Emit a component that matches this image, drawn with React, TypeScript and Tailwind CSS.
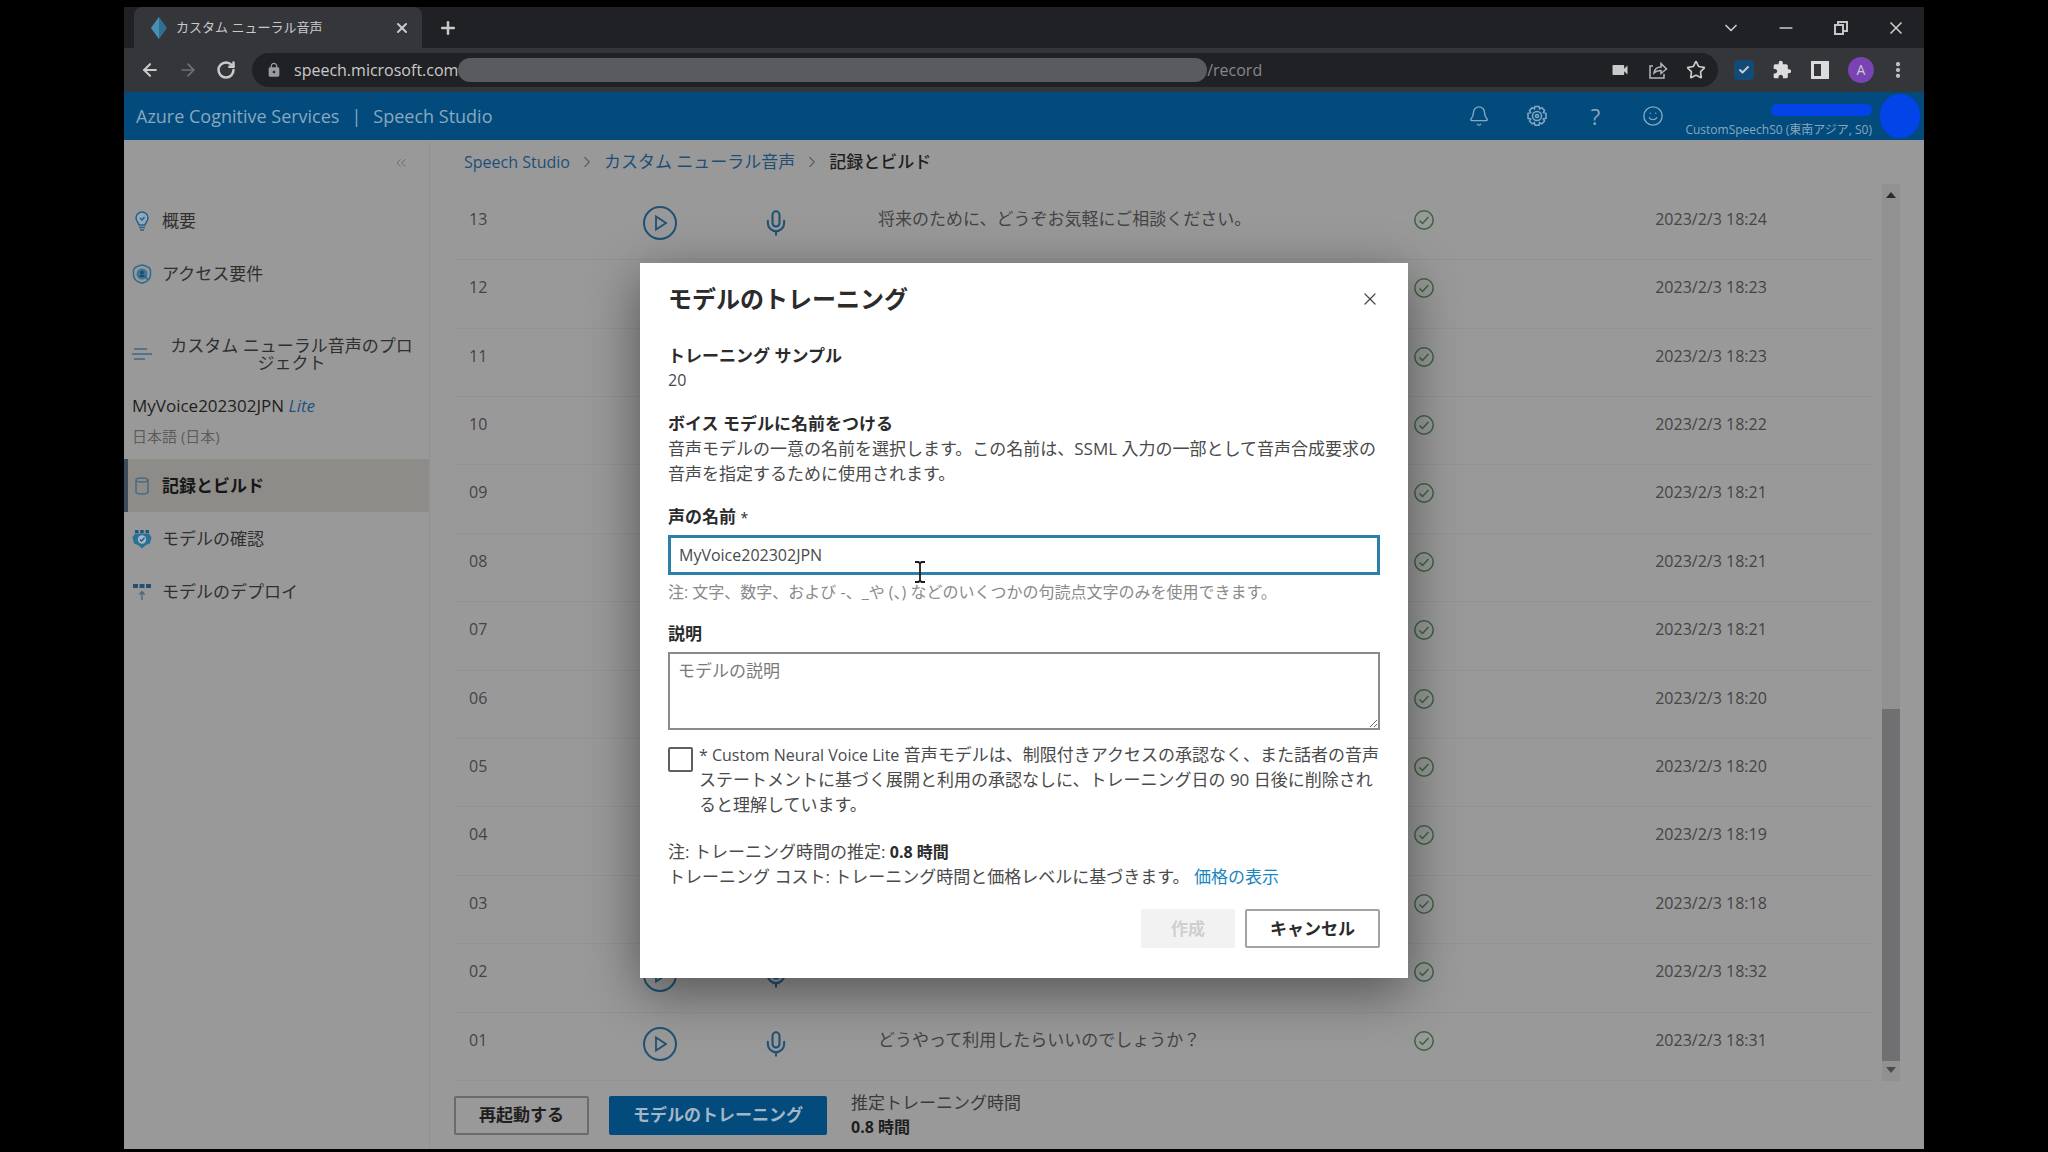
import { useState } from 'react';
import {
  ArrowLeft, ArrowRight, Bell, Check, ChevronDown, ChevronRight, ChevronsLeft,
  EllipsisVertical, Mic, Minus, Plus, RotateCw, Smile, Star, X,
} from 'lucide-react';
import { MdExtension, MdLock, MdVideocam } from 'react-icons/md';

interface Recording {
  id: string;
  text: string;
  date: string;
}

const recordings: Recording[] = [
  { id: '13', text: '将来のために、どうぞお気軽にご相談ください。', date: '2023/2/3 18:24' },
  { id: '12', text: '', date: '2023/2/3 18:23' },
  { id: '11', text: '', date: '2023/2/3 18:23' },
  { id: '10', text: '', date: '2023/2/3 18:22' },
  { id: '09', text: '', date: '2023/2/3 18:21' },
  { id: '08', text: '', date: '2023/2/3 18:21' },
  { id: '07', text: '', date: '2023/2/3 18:21' },
  { id: '06', text: '', date: '2023/2/3 18:20' },
  { id: '05', text: '', date: '2023/2/3 18:20' },
  { id: '04', text: '', date: '2023/2/3 18:19' },
  { id: '03', text: '', date: '2023/2/3 18:18' },
  { id: '02', text: '', date: '2023/2/3 18:32' },
  { id: '01', text: 'どうやって利用したらいいのでしょうか？', date: '2023/2/3 18:31' },
];

const BulbIcon = () => (
  <svg viewBox="0 0 20 20" className="h-5 w-5" fill="none" stroke="#2c5f86" strokeWidth="1.5">
    <path d="M7 14c0-2-3-3.500-3-7a6 6 0 0 1 12 0c0 3.500-3 5-3 7z" fill="#8fa9bb" />
    <path d="M7 16.500h6M8 19h4M8 7l2 2 2.500-3" />
  </svg>
);

const AccessIcon = () => (
  <svg viewBox="0 0 20 20" className="h-5 w-5" fill="none" stroke="#2c6a8f" strokeWidth="1.500">
    <path d="M10 1l3 .8 4 1.700 1.500 2.500v5c0 4.500-4 7-8.500 8.200C5.500 18 1.500 15.500 1.500 11V6L3 3.500l4-1.700z" />
    <circle cx="10" cy="10" r="5.500" fill="#3a7496" stroke="none" />
    <circle cx="10" cy="8.500" r="2" fill="#1d4f70" stroke="none" />
    <path d="M7 13c0-3.500 6-3.500 6 0" fill="#1d4f70" stroke="none" />
    <path d="M13 12l3 4" />
  </svg>
);

const LinesIcon = () => (
  <svg viewBox="0 0 20 16" className="h-4 w-5 shrink-0" stroke="#3f6681" strokeWidth="1.500">
    <path d="M2 3h13M0 8h20M2 13h11" />
  </svg>
);

const DatabaseIcon = () => (
  <svg viewBox="0 0 20 20" className="h-5 w-5" fill="none" stroke="#48687d" strokeWidth="1.400">
    <path d="M4 4v12c0 1.300 2.500 2 6 2s6-.7 6-2V4" />
    <ellipse cx="10" cy="4" rx="6" ry="2" />
  </svg>
);

const ModelIcon = () => (
  <svg viewBox="0 0 20 20" className="h-5 w-5">
    <path d="M3 1h3.500v3H3zM8.200 1h3.500v3H8.200zM13.500 1H17v3h-3.500z" fill="#1f5478" />
    <path d="M3 4.500h14l2.500 4-1.500 6-4 1.500-4 3.500L6 16l-4-1.500-1.500-6z" fill="#2b7095" />
    <circle cx="10" cy="10.500" r="4.200" fill="#9fb8c5" />
    <path d="M8 10.500l1.500 1.600 3-3.400" fill="none" stroke="#1f5478" strokeWidth="1.300" />
  </svg>
);

const DeployIcon = () => (
  <svg viewBox="0 0 20 20" className="h-5 w-5">
    <path d="M1 2h5v4H1zM7.500 2h5v4h-5zM14 2h5v4h-5z" fill="#28506e" />
    <path d="M10 18V10M7.500 12.500L10 9.500l2.500 3" fill="none" stroke="#4f6577" strokeWidth="1.400" />
  </svg>
);

const PlayIcon = () => (
  <svg viewBox="0 0 36 36" className="h-9 w-9" fill="none" stroke="#1f5273" strokeWidth="2">
    <circle cx="18" cy="18" r="16" />
    <path d="M14 11.500v13L24 18z" strokeWidth="1.800" />
  </svg>
);

const DoneIcon = () => (
  <svg viewBox="0 0 22 22" className="mx-auto h-[22px] w-[22px]" fill="none" stroke="#3c6440" strokeWidth="1.500">
    <circle cx="11" cy="11" r="9.200" />
    <path d="M6.500 11.500l3 3 6-6.500" />
  </svg>
);

const GearIcon = () => (
  <svg viewBox="0 0 22 22" className="h-[22px] w-[22px]" fill="none" stroke="currentColor" strokeWidth="1.500">
    <path d="M9 1.500h4l.6 2.400 2.200-1.200 2.700 2.700-1.200 2.200 2.700.7v5l-2.700.7 1.200 2.200-2.700 2.700-2.200-1.200-.6 2.600H9l-.6-2.600-2.200 1.200-2.700-2.700 1.200-2.200L2 13.300v-5l2.700-.7-1.200-2.200 2.700-2.700 2.200 1.200z" />
    <circle cx="11" cy="11" r="4.500" />
    <circle cx="11" cy="11" r="1.500" />
  </svg>
);

const ShareIcon = () => (
  <svg viewBox="0 0 20 20" className="h-5 w-5" fill="none" stroke="#b5b6b9" strokeWidth="1.500">
    <path d="M5 6H2v12h14v-4" />
    <path d="M6 13c.5-4 3-6 7-6V3.500L18.500 9 13 13.500V10.500c-3 0-5 .5-7 2.500z" />
  </svg>
);

const SidePanelIcon = () => (
  <svg viewBox="0 0 20 20" className="h-5 w-5">
    <path d="M1 1h18v18H1z" fill="#dcdcde" />
    <path d="M4 4h7v12H4z" fill="#35363a" />
  </svg>
);

const RestoreIcon = () => (
  <svg viewBox="0 0 16 16" className="h-4 w-4" fill="none" stroke="#c4c5c7" strokeWidth="2">
    <path d="M2 5h8v9H2z" />
    <path d="M5 4V2h9v9h-3" />
  </svg>
);

const projectItems = [
  { label: '記録とビルド', icon: DatabaseIcon, active: true },
  { label: 'モデルの確認', icon: ModelIcon, active: false },
  { label: 'モデルのデプロイ', icon: DeployIcon, active: false },
];

const BrowserBar = () => (
  <div className="bg-[#202124] text-[#c9cacc]">
    <div className="flex h-[41px] items-stretch">
      <div className="ml-[10px] flex w-[288px] items-center rounded-t-lg bg-[#35363a] pl-4 pr-3">
        <svg viewBox="0 0 18 22" className="mr-2 h-[22px] w-[18px]">
          <path d="M9 0l8 11-8 11-8-11z" fill="#2f6f93" />
          <path d="M9 0v22l-8-11z" fill="#4690b5" />
        </svg>
        <span className="flex-1 truncate text-[13px]">カスタム ニューラル音声</span>
        <button type="button" aria-label="タブを閉じる"><X className="h-4 w-4" strokeWidth={3} /></button>
      </div>
      <button type="button" aria-label="新しいタブ" className="ml-4"><Plus className="h-5 w-5" strokeWidth={3} /></button>
      <div className="ml-auto flex items-center gap-[35px] pr-[18px]">
        <button type="button" aria-label="タブを検索"><ChevronDown className="h-5 w-5" /></button>
        <button type="button" aria-label="最小化"><Minus className="h-5 w-5" /></button>
        <button type="button" aria-label="元に戻す" className="px-0.5"><RestoreIcon /></button>
        <button type="button" aria-label="閉じる"><X className="h-5 w-5" /></button>
      </div>
    </div>
    <div className="flex h-11 items-center bg-[#35363a] pl-4 pr-4">
      <button type="button" aria-label="戻る"><ArrowLeft className="h-5 w-5" strokeWidth={2.5} /></button>
      <button type="button" aria-label="進む" className="ml-[18px] text-[#707174]"><ArrowRight className="h-5 w-5" /></button>
      <button type="button" aria-label="再読み込み" className="ml-[18px]"><RotateCw className="h-5 w-5" strokeWidth={3} /></button>
      <div className="ml-4 flex h-[34px] flex-1 items-center rounded-full bg-[#202124] pl-[14px] pr-3">
        <MdLock className="mr-3 h-4 w-4 text-[#9a9b9e]" />
        <span className="text-base">speech.microsoft.com</span>
        <span className="h-6 w-[52%] rounded-full bg-[#5a5b5e]" />
        <span className="text-base text-[#85868a]">/record</span>
        <div className="ml-auto flex items-center gap-[18px]">
          <MdVideocam className="h-5 w-5" />
          <ShareIcon />
          <Star className="h-5 w-5" />
        </div>
      </div>
      <div className="ml-4 flex items-center gap-[18px]">
        <span className="flex h-5 w-5 items-center justify-center rounded-sm bg-[#124a78]"><Check className="h-3 w-3" strokeWidth={4} /></span>
        <MdExtension className="h-5 w-5 text-[#dcdcde]" />
        <SidePanelIcon />
        <span className="flex h-[26px] w-[26px] items-center justify-center rounded-full bg-[#7a43b3] text-sm">A</span>
        <button type="button" aria-label="メニュー" className="-ml-1"><EllipsisVertical className="h-5 w-5" strokeWidth={3} /></button>
      </div>
    </div>
  </div>
);

const Header = () => (
  <header className="flex h-12 items-center bg-[#034b7c] pl-3 pr-1 text-[#86a8c0]">
    <span className="text-[18px]">Azure Cognitive Services</span>
    <span className="mx-3 text-[18px]">|</span>
    <span className="text-[18px]">Speech Studio</span>
    <div className="ml-auto flex items-center gap-9 pr-[21px]">
      <button type="button" aria-label="通知"><Bell className="h-[22px] w-[22px]" strokeWidth={1.5} /></button>
      <button type="button" aria-label="設定"><GearIcon /></button>
      <button type="button" aria-label="ヘルプ" className="w-[22px] text-[22px]">?</button>
      <button type="button" aria-label="フィードバック"><Smile className="h-[22px] w-[22px]" strokeWidth={1.5} /></button>
    </div>
    <div className="flex flex-col items-end gap-1 pt-3">
      <span className="h-3 w-[101px] rounded-full bg-[#0244e8]" />
      <span className="text-[12px] leading-5">CustomSpeechS0 (東南アジア, S0)</span>
    </div>
    <span className="ml-2 h-11 w-10 rounded-[20px] bg-[#0244e8]" />
  </header>
);

const Sidebar = () => (
  <nav className="flex w-[306px] shrink-0 flex-col border-r border-[#939293] text-[17px] text-[#2f2f30]">
    <div className="mb-2 flex h-[46px] items-center justify-end pr-5 text-[#6c6c6d]">
      <button type="button" aria-label="折りたたむ"><ChevronsLeft className="h-4 w-4" strokeWidth={1.5} /></button>
    </div>
    <a href="#overview" className="flex h-[53px] items-center gap-[10px] pl-2"><BulbIcon />概要</a>
    <a href="#access" className="flex h-[53px] items-center gap-[10px] pl-2"><AccessIcon />アクセス要件</a>
    <div className="mt-4 flex h-[75px] items-center gap-[14px] pl-2 pr-3 leading-[17px]">
      <LinesIcon />
      <span className="flex-1 text-center">カスタム ニューラル音声のプロジェクト</span>
    </div>
    <div className="pl-2 leading-[30px]">
      <p className="font-medium text-[#1f1f20]">MyVoice202302JPN <i className="text-[#1c5380]">Lite</i></p>
      <p className="text-[15px] text-[#5c5c5d]">日本語 (日本)</p>
    </div>
    <div className="mt-2 flex flex-col">
      {projectItems.map(({ label, icon: Icon, active }) => (
        <a
          key={label}
          href="#project"
          className={`flex h-[53px] items-center gap-[10px] border-l-4 pl-1 ${
            active ? 'border-[#3d4d5e] bg-[#8d8c88] font-bold text-[#161617]' : 'border-transparent'
          }`}
        >
          <Icon />
          {label}
        </a>
      ))}
    </div>
  </nav>
);

const RecordingTable = () => (
  <table className="h-full w-full table-fixed text-[17px] text-[#444445]">
    <colgroup>
      <col className="w-[112px]" />
      <col className="w-[196px]" />
      <col className="w-[44px]" />
      <col />
      <col className="w-[232px]" />
      <col className="w-[334px]" />
    </colgroup>
    <tbody>
      {recordings.map(({ id, text, date }) => (
        <tr key={id} className="border-b border-[#939293] align-top">
          <td className="pl-[15px] pt-[15px] text-base">{id}</td>
          <td className="pt-[13px]"><button type="button" aria-label={`${id} を再生`} className="ml-[76px] block"><PlayIcon /></button></td>
          <td className="pt-[17px]"><button type="button" aria-label={`${id} を録音`} className="block"><Mic className="h-7 w-7 text-[#1f5273]" strokeWidth={1.75} /></button></td>
          <td className="pl-[72px] pt-[14px]">{text}</td>
          <td className="pt-[17px]"><DoneIcon /></td>
          <td className="pl-2 pt-[15px] text-center text-base">{date}</td>
        </tr>
      ))}
    </tbody>
  </table>
);

const TrainDialog = () => {
  const [name, setName] = useState('MyVoice202302JPN');
  const [description, setDescription] = useState('');
  const [agreed, setAgreed] = useState(false);

  return (
    <div
      role="dialog"
      aria-labelledby="dialog-title"
      className="w-[768px] bg-white px-7 pb-[30px] pt-4 text-[17px] leading-[25px] text-[#4a4a4b] shadow-[0_14px_50px_rgba(0,0,0,0.45)]"
    >
      <div className="flex h-10 items-center justify-between">
        <h2 id="dialog-title" className="text-2xl font-bold text-[#2b2b2c]">モデルのトレーニング</h2>
        <button type="button" aria-label="閉じる"><X className="h-5 w-5" strokeWidth={1.5} /></button>
      </div>

      <h3 className="mt-6 font-bold text-[#2b2b2c]">トレーニング サンプル</h3>
      <p className="text-base leading-[25px]">20</p>

      <h3 className="mt-[18px] font-bold text-[#2b2b2c]">ボイス モデルに名前をつける</h3>
      <p>音声モデルの一意の名前を選択します。この名前は、SSML 入力の一部として音声合成要求の音声を指定するために使用されます。</p>

      <label htmlFor="voice-name" className="mt-[18px] block font-bold text-[#2b2b2c]">声の名前 <span className="text-sm font-normal leading-none">*</span></label>
      <div className="relative mt-[6px]">
        <input
          id="voice-name"
          type="text"
          value={name}
          onChange={(e) => setName(e.target.value)}
          className="block h-10 w-full border-[3px] border-[#2d7fa8] bg-white px-2 text-base outline-none"
        />
        {/* text cursor */}
        <svg viewBox="0 0 12 22" className="absolute left-[246px] top-[26px] h-[22px] w-3" fill="none" stroke="#1d1d1e" strokeWidth="1.800">
          <path d="M1 1h3.500L6 2.500 7.500 1H11M6 2.500v17M1 21h3.500L6 19.500 7.500 21H11" />
        </svg>
      </div>
      <p className="mt-[5px] text-base leading-[25px] text-[#8a8a8b]">注: 文字、数字、および -、_や (、) などのいくつかの句読点文字のみを使用できます。</p>

      <label htmlFor="voice-description" className="mt-4 block font-bold text-[#2b2b2c]">説明</label>
      <textarea
        id="voice-description"
        value={description}
        onChange={(e) => setDescription(e.target.value)}
        placeholder="モデルの説明"
        className="mt-[6px] block h-[78px] w-full border-2 border-[#8b8b8c] px-2 pt-1 outline-none placeholder:text-[#7a7a7b]"
      />

      <div className="mt-3 flex items-start gap-[6px]">
        <input
          id="agree"
          type="checkbox"
          checked={agreed}
          onChange={(e) => setAgreed(e.target.checked)}
          className="mt-[5px] h-[25px] w-[25px] shrink-0 appearance-none rounded-xs border-2 border-[#5f5f60] checked:bg-[#0078d4]"
        />
        <label htmlFor="agree" className="-mr-2">
          <span className="text-base leading-none">* Custom Neural Voice Lite</span> 音声モデルは、制限付きアクセスの承認なく、また話者の音声ステートメントに基づく展開と利用の承認なしに、トレーニング日の 90 日後に削除されると理解しています。
        </label>
      </div>

      <p className="mt-[22px]">注: トレーニング時間の推定: <b className="text-base leading-none text-[#2b2b2c]">0.8 時間</b></p>
      <p>トレーニング コスト: トレーニング時間と価格レベルに基づきます。 <a href="#pricing" className="text-[#1a86bd]">価格の表示</a></p>

      <div className="mt-5 flex justify-end gap-[10px]">
        <button type="button" disabled className="h-[39px] w-[94px] bg-[#f3f2f2] font-bold text-[#cfcfd0]">作成</button>
        <button type="button" className="h-[39px] w-[135px] rounded-xs border-2 border-[#a3a3a4] font-bold text-[#2b2b2c]">キャンセル</button>
      </div>
    </div>
  );
};

export default function App() {
  return (
    <div className="relative flex h-screen flex-col bg-black px-[124px] pb-[3px] pt-[7px] font-['Open_Sans','Noto_Sans_CJK_JP',sans-serif]">
      <BrowserBar />
      <Header />
      <div className="flex min-h-0 flex-1 bg-[#9a999a]">
        <Sidebar />
        <main className="flex min-w-0 flex-1 flex-col pl-6 pr-6">
          <div className="flex h-11 shrink-0 items-center gap-2 pl-[10px] text-[17px] text-[#1d4f76]">
            <a href="#studio" className="text-base">Speech Studio</a>
            <ChevronRight className="h-[18px] w-[18px] text-[#5c5c5d]" strokeWidth={1.5} />
            <a href="#voice">カスタム ニューラル音声</a>
            <ChevronRight className="h-[18px] w-[18px] text-[#5c5c5d]" strokeWidth={1.5} />
            <span className="font-medium text-[#1f1f20]">記録とビルド</span>
          </div>
          <div className="flex min-h-0 flex-1 gap-2">
            <div className="flex-1 pt-2">
              <RecordingTable />
            </div>
            <div className="flex w-[18px] flex-col items-center bg-[#929192] py-2">
              <svg viewBox="0 0 10 6" className="h-[6px] w-[10px]"><path d="M5 0l5 6H0z" fill="#2b2b2c" /></svg>
              <span className="mb-[6px] mt-auto h-[40%] w-full bg-[#706f71]" />
              <svg viewBox="0 0 10 6" className="h-[6px] w-[10px]"><path d="M0 0h10L5 6z" fill="#4c4c4d" /></svg>
            </div>
          </div>
          <div className="flex h-[68px] shrink-0 items-center text-[17px]">
            <button type="button" className="h-[39px] w-[135px] rounded-xs border-2 border-[#6b6b6c] font-bold text-[#1f1f20]">再起動する</button>
            <button type="button" className="ml-5 h-[39px] w-[218px] rounded-xs bg-[#034b7c] font-bold text-[#a3b6c6]">モデルのトレーニング</button>
            <div className="ml-6 leading-[25px] text-[#3a3a3b]">
              <p>推定トレーニング時間</p>
              <p className="text-base font-bold leading-[25px] text-[#1f1f20]">0.8 時間</p>
            </div>
          </div>
        </main>
      </div>
      <div className="absolute inset-x-0 top-[263px] flex justify-center">
        <TrainDialog />
      </div>
    </div>
  );
}
